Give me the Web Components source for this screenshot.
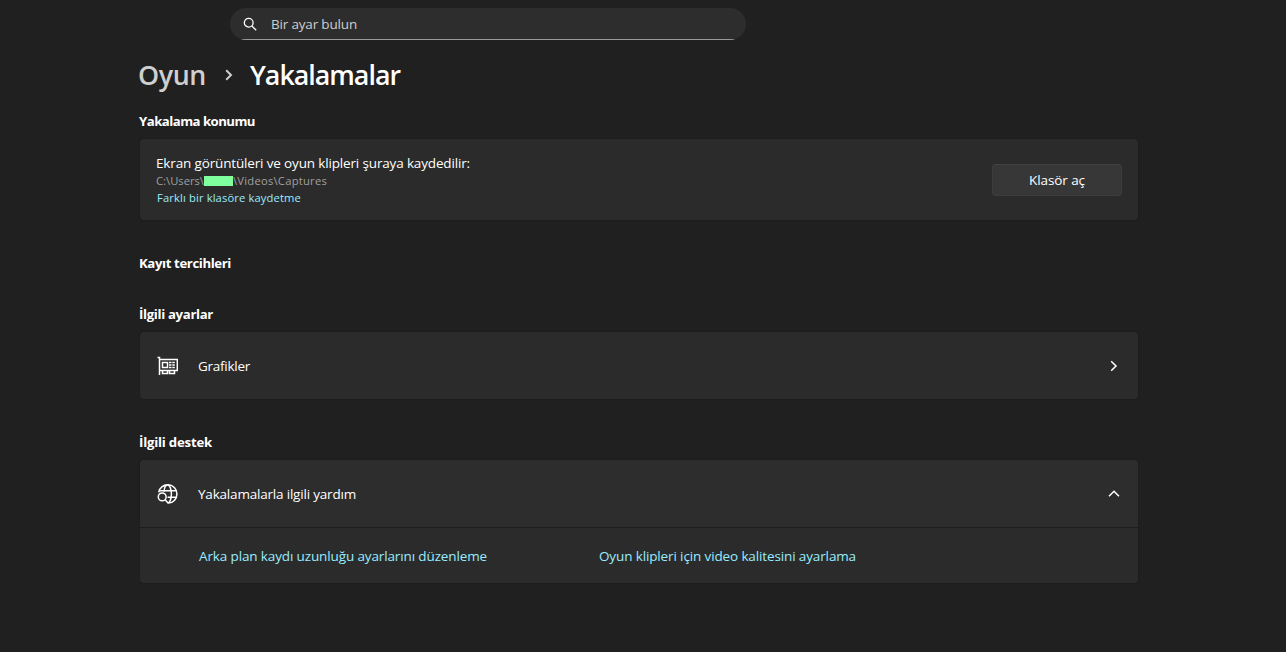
<!DOCTYPE html>
<html lang="tr">
<head>
<meta charset="utf-8">
<title>Yakalamalar</title>
<style>
    body {
        margin: 0;
        height: 652px;
        overflow: hidden;
        background: #202020;
        color: #fff;
        font: 13.5px/20px "Open Sans", "Noto Sans", sans-serif;
    }
</style>
</head>
<body>
<settings-page></settings-page>

<script>
// Single line of text, tracked so that it fills the given width
class FitText extends HTMLElement {
    constructor() {
        super();
        this.attachShadow({ mode: 'open' });
    }

    connectedCallback() {
        this.shadowRoot.innerHTML = `
            <style>
                :host { display: block; white-space: nowrap; }
                span { display: inline-block; vertical-align: top; }
            </style>
            <span><slot></slot></span>
        `;
        const width = Number(this.getAttribute('width'));
        const span = this.shadowRoot.querySelector('span');
        const natural = span.getBoundingClientRect().width;
        if (!width || !natural) return;
        this.style.width = width + 'px';
        span.style.letterSpacing = (width - natural) / this.textContent.length + 'px';
    }
}

const ICONS = {
    search: '<circle cx="5.7" cy="5.7" r="4.4"/><path d="M8.9 9 13.2 13.3"/>',
    right: '<path d="M1.2 1.2 6 6 1.2 10.8"/>',
    up: '<path d="M1 6.2 6 1.2 11 6.2"/>',
    gpu: '<path d="M0.5 1.5H2.5V19M2.5 3.5H20.3V14.5H2.5M5.5 14.5V17.5H10.5V14.5M12.5 14.5V17.5H17.5V14.5"/><path d="M5.5 6.5H10.5V11.5H5.5Z"/><path d="M12 6.5H18.5M12 9H18.5M12 11.5H18.5" stroke-dasharray="2.5 .8"/>',
    globe: '<path d="M1.7 8.3A9.2 9.2 0 1 1 11.6 19.1M2 6.8H19.3M10.6 13.3H19.3M7 7.8C7.2 4.2 8.5 1 10.6 1S14.4 5 14.4 10 12.7 19 10.8 19.1"/><circle cx="5.2" cy="12.9" r="3.9"/><path d="M8 15.8 11.3 19.1"/>'
};

class LineIcon extends HTMLElement {
    constructor() {
        super();
        this.attachShadow({ mode: 'open' });
    }

    connectedCallback() {
        const [w, h] = this.getAttribute('size').split(' ');
        this.shadowRoot.innerHTML = `
            <style>
                :host { display: block; flex: none; }
                svg {
                    display: block;
                    fill: none;
                    stroke: currentColor;
                    stroke-width: var(--stroke, 1.5);
                }
            </style>
            <svg width="${w}" height="${h}" viewBox="0 0 ${w} ${h}">${ICONS[this.getAttribute('name')]}</svg>
        `;
    }
}

class SearchBox extends HTMLElement {
    constructor() {
        super();
        this.attachShadow({ mode: 'open' });
    }

    connectedCallback() {
        this.shadowRoot.innerHTML = `
            <style>
                :host {
                    display: flex;
                    align-items: center;
                    box-sizing: border-box;
                    width: 516px;
                    height: 32px;
                    padding-left: 13px;
                    gap: 14px;
                    border-radius: 16px;
                    background: linear-gradient(#9a9a9a, #9a9a9a) center bottom / 100% 1px no-repeat #2d2d2d;
                    color: #cecece;
                }
                line-icon { --stroke: 1.3; color: #fff; }
            </style>
            <line-icon name="search" size="14 14"></line-icon>
            <fit-text width="86">Bir ayar bulun</fit-text>
        `;
    }
}

class PageTitle extends HTMLElement {
    constructor() {
        super();
        this.attachShadow({ mode: 'open' });
    }

    connectedCallback() {
        this.shadowRoot.innerHTML = `
            <style>
                :host {
                    display: flex;
                    align-items: center;
                    height: 40px;
                    font-size: 26.8px;
                    font-weight: 600;
                    line-height: 40px;
                }
                .parent { color: #cfcfcf; }
                line-icon { --stroke: 2; margin: 0 17px 0 19px; color: #cfcfcf; }
            </style>
            <fit-text class="parent" width="68">Oyun</fit-text>
            <line-icon name="right" size="8 12"></line-icon>
            <fit-text width="150">Yakalamalar</fit-text>
        `;
    }
}

class SettingsCard extends HTMLElement {
    constructor() {
        super();
        this.attachShadow({ mode: 'open' });
    }

    connectedCallback() {
        this.shadowRoot.innerHTML = `
            <style>
                :host {
                    display: flex;
                    align-items: center;
                    box-sizing: border-box;
                    width: 1000px;
                    height: 69px;
                    padding: 0 16px 0 17px;
                    border: 1px solid #1d1d1d;
                    border-radius: 4px;
                    background: #2b2b2b;
                    background-clip: padding-box;
                }
                :host([open]) { border-radius: 4px 4px 0 0; background-color: #2d2d2d; }
                :host([body]) {
                    height: 56px;
                    border-top: 0;
                    border-radius: 0 0 4px 4px;
                    padding-left: 59px;
                }
                :host([tall]) { height: 83px; padding-left: 16px; }
                .end { margin-left: auto; }
            </style>
            <slot></slot>
            <div class="end"><slot name="end"></slot></div>
        `;
    }
}

class PushButton extends HTMLElement {
    constructor() {
        super();
        this.attachShadow({ mode: 'open' });
    }

    connectedCallback() {
        this.shadowRoot.innerHTML = `
            <style>
                :host { display: block; }
                button {
                    display: flex;
                    align-items: center;
                    justify-content: center;
                    box-sizing: border-box;
                    width: 130px;
                    height: 32px;
                    padding: 0;
                    border: 1px solid #3c3c3c;
                    border-top-color: #424242;
                    border-radius: 4px;
                    background: #373737;
                    color: #fff;
                    font: inherit;
                }
            </style>
            <button><slot></slot></button>
        `;
    }
}

class SettingsPage extends HTMLElement {
    constructor() {
        super();
        this.attachShadow({ mode: 'open' });
    }

    connectedCallback() {
        this.shadowRoot.innerHTML = `
            <style>
                :host { display: block; padding-top: 8px; }
                search-box { margin-left: 230px; }
                main { display: flex; flex-direction: column; width: 1000px; margin-left: 139px; }
                page-title { margin: 15px 0 0 -1px; }
                h2 { display: flex; margin: 0; height: 20px; font-size: 13.2px; font-weight: 700; }
                h2.location { margin: 16px 0 7px; }
                h2.recording { margin: 32px 0 0; }
                h2.related { margin: 31px 0 7px; }
                h2.support { margin: 32px 0 7px; }
                .info { display: flex; flex-direction: column; }
                .path { display: flex; align-items: center; height: 17px; font-size: 11.2px; line-height: 17px; color: #a0a0a0; }
                .path fit-text { margin-bottom: 1px; }
                .mask { width: 29px; height: 10px; background: #80ff9f; }
                .small { height: 17px; margin: -1px 0 1px 1px; font-size: 11.2px; line-height: 17px; }
                .link { color: #99ebff; }
                .name { margin-left: 20px; }
                .chevron { margin-right: 4px; }
                .chevron.up { margin-right: 2px; }
                .second { margin-left: 112px; }
            </style>
            <search-box></search-box>
            <main>
                <page-title></page-title>

                <h2 class="location"><fit-text width="116">Yakalama konumu</fit-text></h2>
                <settings-card tall>
                    <div class="info">
                        <fit-text width="314">Ekran görüntüleri ve oyun klipleri şuraya kaydedilir:</fit-text>
                        <div class="path">
                            <fit-text width="48">C:\\Users\\</fit-text>
                            <div class="mask"></div>
                            <fit-text width="94">\\Videos\\Captures</fit-text>
                        </div>
                        <fit-text class="small link" width="144">Farklı bir klasöre kaydetme</fit-text>
                    </div>
                    <push-button slot="end"><fit-text width="56">Klasör aç</fit-text></push-button>
                </settings-card>

                <h2 class="recording"><fit-text width="92">Kayıt tercihleri</fit-text></h2>

                <h2 class="related"><fit-text width="74">İlgili ayarlar</fit-text></h2>
                <settings-card>
                    <line-icon name="gpu" size="21 20"></line-icon>
                    <fit-text class="name" width="52">Grafikler</fit-text>
                    <line-icon class="chevron" slot="end" name="right" size="8 12"></line-icon>
                </settings-card>

                <h2 class="support"><fit-text width="73">İlgili destek</fit-text></h2>
                <settings-card open>
                    <line-icon name="globe" size="21 20"></line-icon>
                    <fit-text class="name" width="158">Yakalamalarla ilgili yardım</fit-text>
                    <line-icon class="chevron up" slot="end" name="up" size="12 7"></line-icon>
                </settings-card>
                <settings-card body>
                    <fit-text class="link" width="288">Arka plan kaydı uzunluğu ayarlarını düzenleme</fit-text>
                    <fit-text class="link second" width="257">Oyun klipleri için video kalitesini ayarlama</fit-text>
                </settings-card>
            </main>
        `;
    }
}

customElements.define('fit-text', FitText);
customElements.define('line-icon', LineIcon);
customElements.define('search-box', SearchBox);
customElements.define('page-title', PageTitle);
customElements.define('settings-card', SettingsCard);
customElements.define('push-button', PushButton);
customElements.define('settings-page', SettingsPage);
</script>
</body>
</html>
